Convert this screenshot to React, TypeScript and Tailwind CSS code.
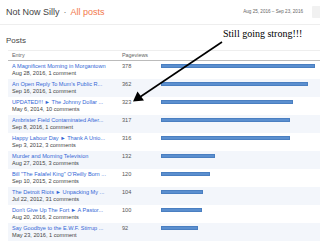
type Post = {
  title: string;
  meta: string;
  views: number;
};

const posts: Post[] = [
  { title: "A Magnificent Morning in Morgantown", meta: "Aug 28, 2016, 1 comment", views: 378 },
  { title: "An Open Reply To Mum's Public R...", meta: "Sep 16, 2016, 1 comment", views: 362 },
  { title: "UPDATED!!! \u25BA The Johnny Dollar ...", meta: "May 6, 2014, 10 comments", views: 323 },
  { title: "Ambrister Field Contaminated After...", meta: "Sep 8, 2016, 1 comment", views: 317 },
  { title: "Happy Labour Day \u25BA Thank A Unio...", meta: "Sep 3, 2012, 3 comments", views: 316 },
  { title: "Murder and Morning Television", meta: "Aug 27, 2015, 3 comments", views: 132 },
  { title: "Bill \"The Falafel King\" O'Reilly Born ...", meta: "Sep 10, 2015, 2 comments", views: 120 },
  { title: "The Detroit Riots \u25BA Unpacking My ...", meta: "Jul 22, 2012, 31 comments", views: 104 },
  { title: "Don't Give Up The Fort \u25BA A Pastor...", meta: "Aug 20, 2016, 2 comments", views: 100 },
  { title: "Say Goodbye to the E.W.F. Stirrup ...", meta: "May 23, 2016, 1 comment", views: 92 },
];

const MAX = 378;
const BAR_MAX = 154;

const Header: React.FC = () => {
  return (
    <header className="flex h-[25px] items-center justify-between border-b border-[#eeeeee] pl-[6px]">
      <div className="flex items-center text-[9px] leading-[12px] text-[#444444]">
        <span>Not Now Silly</span>
        <span className="px-[4px] text-[#777777]">·</span>
        <span className="text-[#f2784b]">All posts</span>
      </div>
      <div className="flex items-center">
        <span className="text-[4.6px] leading-[6px] text-[#666666]">Aug 25, 2016 – Sep 23, 2016</span>
        <div className="ml-[9px] h-[12px] w-[8px] rounded-l-[1px] bg-[#f1f1f1]" />
      </div>
    </header>
  );
};

const PostRow: React.FC<{ post: Post; index: number }> = ({ post, index }) => {
  const width = (post.views / MAX) * BAR_MAX;
  return (
    <div
      className={`grid h-[18px] grid-cols-[110px_39px_1fr] ${
        index % 2 === 1 ? "bg-[#f3f6fb]" : "bg-white"
      }`}
    >
      <div className="overflow-hidden whitespace-nowrap pl-[4px] pt-[2px]">
        <div className="text-[5.6px] leading-[7px] text-[#3367d6]">{post.title}</div>
        <div className="text-[5.6px] leading-[7px] text-[#444444]">{post.meta}</div>
      </div>
      <div className="pl-[4px] pt-[2px] text-[5.6px] leading-[7px] text-[#555555]">{post.views}</div>
      <div className="pl-[4px] pt-[3px]">
        <div
          className="h-[4px] border border-[#4a7fc1] bg-[#5b8fcf]"
          style={{ width: `${width}px` }}
        />
      </div>
    </div>
  );
};

export default function App() {
  return (
    <div
      className="relative h-[243px] w-[320px] overflow-hidden bg-white"
      style={{ fontFamily: '"Liberation Sans", Arial, sans-serif' }}
    >
      <Header />
      <div className="pl-[6px] pt-[11px] pb-[4px] text-[8px] leading-[10px] text-[#444444]">Posts</div>
      <div className="ml-[8px]">
        <div className="grid h-[11px] grid-cols-[110px_39px_1fr] items-center border-t border-b border-t-[#eeeeee] border-b-[#bbbbbb] text-[5.4px] leading-[7px] text-[#666666]">
          <div className="pl-[4px]">Entry</div>
          <div className="pl-[4px]">Pageviews</div>
          <div />
        </div>
        {posts.map((post, i) => (
          <PostRow key={post.title} post={post} index={i} />
        ))}
      </div>

      {/* annotation */}
      <div
        className="absolute left-[223px] top-[28px] text-[10px] leading-[12px] text-black"
        style={{ fontFamily: '"Liberation Serif", "Times New Roman", serif' }}
      >
        Still going strong!!!
      </div>
      <svg className="absolute left-0 top-0" width="320" height="243" viewBox="0 0 320 243">
        <line x1="222" y1="42" x2="140" y2="97" stroke="#000" strokeWidth="1.6" />
        <polygon points="133,101.5 137.5,91.5 144,100.5" fill="#000" />
      </svg>
    </div>
  );
}
